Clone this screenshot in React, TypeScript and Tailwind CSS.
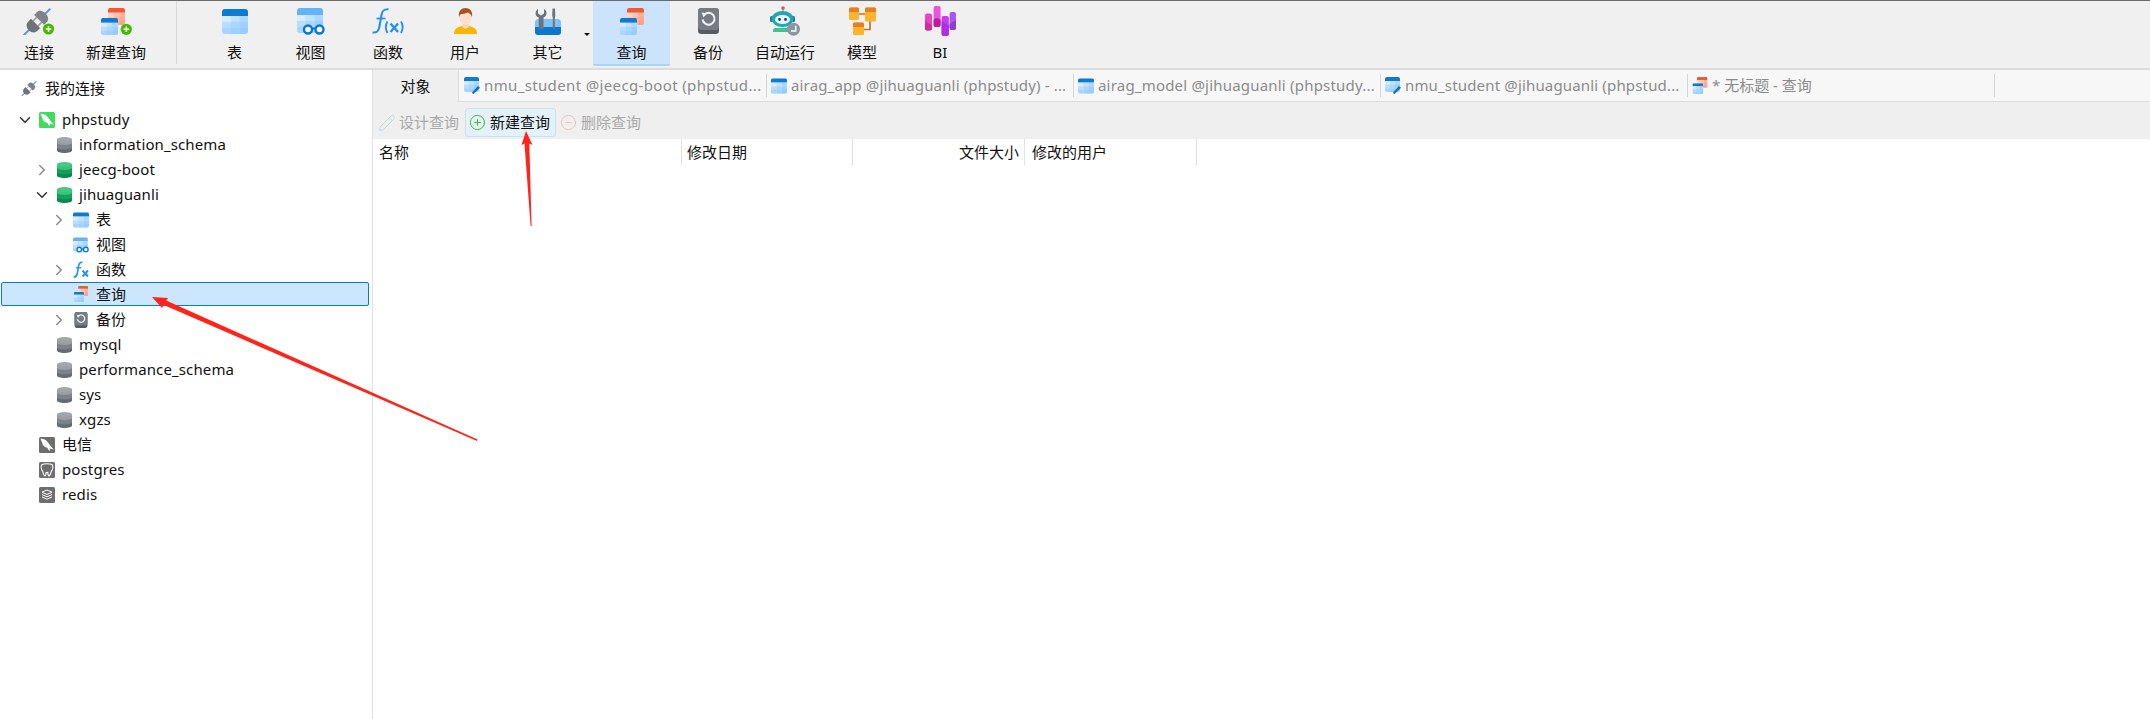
import { useId } from 'react'
import type { ReactNode } from 'react'
import { ChevronDown, ChevronRight, CircleMinus, CirclePlus, Pencil } from 'lucide-react'

const BLUE = ['#d8ecff', '#c0e1ff', '#acd7ff', '#b9ddff', '#aad6ff', '#9dd0ff', '#a8d5ff', '#9ed1ff', '#96ccff']
const RED = ['#ffd6c8', '#ffc3ae', '#ffb097', '#ffc6b2', '#ffb59e', '#ffa88e', '#ffb8a2', '#ffab92', '#ffa085']

function TableShape({ x, y, w, h, head, cells, r = 3 }: { x: number; y: number; w: number; h: number; head: string; cells: string[]; r?: number }) {
  const id = useId()
  const headH = h * 0.28
  const cw = w / 3
  const ch = (h - headH) / 3
  return (
    <g>
      <clipPath id={id}>
        <rect x={x} y={y} width={w} height={h} rx={r} />
      </clipPath>
      <g clipPath={`url(#${id})`}>
        <rect x={x} y={y} width={w} height={headH} fill={head} />
        {cells.map((c, i) => (
          <rect
            key={i}
            x={x + (i % 3) * cw}
            y={y + headH + Math.floor(i / 3) * ch}
            width={cw + 0.3}
            height={ch + 0.3}
            fill={c}
          />
        ))}
      </g>
    </g>
  )
}

function Badge({ cx, cy }: { cx: number; cy: number }) {
  return (
    <g>
      <circle cx={cx} cy={cy} r={5.6} fill="#45b900" />
      <path d={`M${cx - 2.8} ${cy}h5.6M${cx} ${cy - 2.8}v5.6`} stroke="#fff" strokeWidth={1.5} />
    </g>
  )
}

function PlugShape() {
  return (
    <g transform="rotate(-45 14 14)">
      <path d="M-4 14H3M25 14H32" stroke="#5a9bd0" strokeWidth={2} strokeLinecap="round" />
      <path d="M12 7.5H8C4.5 7.5 2.5 10.5 2.5 14S4.5 20.5 8 20.5H12Z" fill="#6c7379" />
      <path d="M17 7H21C24.5 7 26 10.5 26 14S24.5 21 21 21H17Z" fill="#7d8389" />
      <path d="M12 10.5H17M12 17.5H17" stroke="#9a9fa4" strokeWidth={1.6} />
    </g>
  )
}

function PlugIcon({ size = 18, badge = false }: { size?: number; badge?: boolean }) {
  return (
    <svg width={size} height={(size * 27) / 32} viewBox="0 0 32 27">
      <PlugShape />
      {badge && <Badge cx={25.5} cy={21} />}
    </svg>
  )
}

function TableIcon({ w = 16, h = 16 }: { w?: number; h?: number }) {
  return (
    <svg width={w} height={h} viewBox="0 0 26 25">
      <TableShape x={0} y={0} w={26} h={25} head="#0b7bd4" cells={BLUE} />
    </svg>
  )
}

function EditTableIcon() {
  return (
    <svg width={16} height={17} viewBox="0 0 16 17">
      <TableShape x={0} y={0} w={15} h={15} head="#0b7bd4" cells={BLUE} r={2} />
      <path d="M8 15.5L14 9l2 1.8L9.5 17H8Z" fill="#0f6fbd" />
      <path d="M8 15.5V17h1.5Z" fill="#f2b25c" />
    </svg>
  )
}

function QueryIcon({ w = 24, h = 27, badge = false }: { w?: number; h?: number; badge?: boolean }) {
  const vw = badge ? 31 : 24
  return (
    <svg width={w} height={h} viewBox={`0 0 ${vw} 27`}>
      <TableShape x={7} y={0} w={17} h={17} head="#ee5a36" cells={RED} r={2} />
      <TableShape x={0} y={10} w={17} h={17} head="#0b7bd4" cells={BLUE} r={2} />
      {badge && <Badge cx={25.3} cy={21.3} />}
    </svg>
  )
}

function ViewIcon({ w = 28, h = 27 }: { w?: number; h?: number }) {
  return (
    <svg width={w} height={h} viewBox="0 0 28 27">
      <TableShape x={0} y={0} w={26} h={25} head="#62b4f7" cells={BLUE} />
      <circle cx={11} cy={21.5} r={4} fill="#fff" stroke="#0b78d0" strokeWidth={2.4} />
      <circle cx={22.5} cy={21.5} r={4} fill="#fff" stroke="#0b78d0" strokeWidth={2.4} />
      <path d="M15 20.5h3.5" stroke="#0b78d0" strokeWidth={2} />
    </svg>
  )
}

function FxIcon() {
  return (
    <svg width={33} height={26} viewBox="0 0 33 26" fill="none" stroke="#2193ee" strokeWidth={2.1}>
      <path d="M0.5 24.5C5 25 6.5 23.5 7.3 19L9.6 6.5C10.3 2.5 12 1 16.5 1.2" />
      <path d="M4.5 10.5H13.5" strokeWidth={1.7} />
      <path d="M15.5 13.5C13.3 17 13.3 21 15.5 25" strokeWidth={1.9} />
      <path d="M18.5 15.5L26 24M26 15.5L18.5 24" strokeWidth={2.4} />
      <path d="M29 13.5C31.2 17 31.2 21 29 25" strokeWidth={1.9} />
    </svg>
  )
}

function FnSmall() {
  return (
    <svg width={16} height={17} viewBox="0 0 16 17" fill="none" stroke="#2193ee">
      <path d="M0.5 16C3 16.3 3.8 15 4.3 12.5L5.6 5C6 2.3 7 1.2 9.5 1.3" strokeWidth={1.6} />
      <path d="M2.8 6.8H8.4" strokeWidth={1.3} />
      <path d="M9.5 9.5L15 15.5M15 9.5L9.5 15.5" strokeWidth={1.9} />
    </svg>
  )
}

function UserIcon() {
  return (
    <svg width={23} height={26} viewBox="0 0 23 26">
      <path d="M0 26C0 21 3 19 8 18L15 18C20 19 23 21 23 26Z" fill="#f7b500" />
      <rect x={8.5} y={13} width={6} height={7} fill="#f8cfb1" />
      <path d="M8.5 18.5L11.5 21L14.5 18.5Z" fill="#fddcc6" />
      <ellipse cx={11.5} cy={9} rx={6.3} ry={8} fill="#fde0cb" />
      <path d="M5 9C4 3 7.5 0 11.5 0C15.5 0 19 3 18 9C17 6.5 15.5 5 13.5 4.5C11.5 6 8 6 6.8 6C6 7 5.5 8 5 9Z" fill="#a5541f" />
    </svg>
  )
}

function ToolsIcon() {
  return (
    <svg width={26} height={27} viewBox="0 0 26 27">
      <rect x={0} y={11} width={26} height={16} rx={3.5} fill="#80c2f6" />
      <path d="M0 19H26V24C26 25.7 24.7 27 23 27H3C1.3 27 0 25.7 0 24Z" fill="#0b78d0" />
      <path d="M3 1L3 5.5L6 7.5L9 5.5L9 1C11 2 11.8 4 11.5 6C11.2 8 9.8 9 8.5 9.6V21H3.7V9.6C2 9 0.8 7.8 0.6 6C0.4 4 1.2 2 3 1Z" fill="#69747d" />
      <path d="M17.5 0.5H20L20.3 7.5L19.8 10V21H17.8V10L17.2 7.5Z" fill="#69747d" />
    </svg>
  )
}

function BackupIcon({ w = 21, h = 26 }: { w?: number; h?: number }) {
  return (
    <svg width={w} height={h} viewBox="0 0 21 26">
      <rect x={0} y={0} width={21} height={26} rx={3.5} fill="#555b61" />
      <rect x={0} y={0} width={21} height={22} rx={3.5} fill="#767c81" />
      <path d="M5.8 7A6 6 0 1 1 4.6 11.5" fill="none" stroke="#f0f1f2" strokeWidth={2} />
      <path d="M3.8 4.6L9 5.5L5.4 9.6Z" fill="#f0f1f2" />
    </svg>
  )
}

function BotIcon() {
  return (
    <svg width={31} height={30} viewBox="0 0 31 30">
      <path d="M13 2V6" stroke="#6c9aa2" strokeWidth={1.2} />
      <circle cx={13} cy={2} r={1.8} fill="#ec4d4d" />
      <rect x={0} y={10} width={3} height={6} rx={1.5} fill="#0f7f94" />
      <rect x={22} y={10} width={3} height={6} rx={1.5} fill="#0f7f94" />
      <path d="M5 22H18C19.5 22 20.5 23.5 20.5 26H3C3 23.5 3.5 22 5 22Z" fill="#38c78f" />
      <ellipse cx={12.5} cy={13} rx={11} ry={8} fill="#22a7b5" />
      <ellipse cx={12.5} cy={13.5} rx={7.5} ry={4.6} fill="#e6f6fb" />
      <circle cx={9.5} cy={13.5} r={1.4} fill="#1c3d70" />
      <circle cx={15.5} cy={13.5} r={1.4} fill="#1c3d70" />
      <circle cx={23.5} cy={23.2} r={6.5} fill="#8a97a3" />
      <path d="M25.7 19.7V25H21" fill="none" stroke="#fff" strokeWidth={1.4} />
    </svg>
  )
}

function ModelIcon() {
  const box = (x: number, y: number, w: number, h: number) => (
    <g>
      <rect x={x} y={y} width={w} height={h} rx={1.5} fill="#fdb32c" />
      <path d={`M${x} ${y + 4.5}V${y + 1.5}a1.5 1.5 0 0 1 1.5 -1.5h${w - 3}a1.5 1.5 0 0 1 1.5 1.5V${y + 4.5}Z`} fill="#e57d25" />
    </g>
  )
  return (
    <svg width={27} height={28} viewBox="0 0 27 28">
      <path d="M9 7H17M21 13V22.5H14" fill="none" stroke="#c96f2a" strokeWidth={1.7} />
      {box(0, 0.5, 10, 12.5)}
      {box(16, 0.5, 11, 14)}
      {box(4, 15.5, 11, 12.5)}
    </svg>
  )
}

function BiIcon() {
  return (
    <svg width={31} height={30} viewBox="0 0 31 30">
      <rect x={0} y={7.5} width={7} height={17} rx={2} fill="#e646c0" />
      <path d="M0 15C3 16 5 18 7 20V22.5C7 23.6 6.1 24.5 5 24.5H2C0.9 24.5 0 23.6 0 22.5Z" fill="#d52aa0" />
      <rect x={8.6} y={0} width={7} height={21} rx={2} fill="#ee52da" />
      <path d="M8.6 14C10 11.5 14 11.5 15.6 14V19C15.6 20.1 14.7 21 13.6 21H10.6C9.5 21 8.6 20.1 8.6 19Z" fill="#b81f97" />
      <rect x={16.6} y={10} width={7.2} height={20} rx={2} fill="#c33eea" />
      <path d="M16.6 15C19 17 21.5 19 23.8 19V28C23.8 29.1 22.9 30 21.8 30H18.6C17.5 30 16.6 29.1 16.6 28Z" fill="#b02ee0" />
      <rect x={24.6} y={6} width={6.4} height={18} rx={2} fill="#ab54f2" />
      <path d="M24.6 18C27 16 29 15 31 14.5V22C31 23.1 30.1 24 29 24H26.6C25.5 24 24.6 23.1 24.6 22Z" fill="#8a3fd4" />
    </svg>
  )
}

function DbIcon({ green = false }: { green?: boolean }) {
  const top = green ? '#45c985' : '#a2a5a9'
  const mid = green ? '#12a05c' : '#7e8389'
  const low = green ? '#0a8a4a' : '#666c72'
  return (
    <svg width={15} height={16} viewBox="0 0 15 16">
      <path d="M0 2.5V13.5C0 15 3.4 16 7.5 16S15 15 15 13.5V2.5Z" fill={low} />
      <path d="M0 2.5V10C0 11.4 3.4 12.4 7.5 12.4S15 11.4 15 10V2.5Z" fill={mid} />
      <path d="M0 2.5V5.5C0 6.9 3.4 7.9 7.5 7.9S15 6.9 15 5.5V2.5Z" fill={top} opacity={0.8} />
      <ellipse cx={7.5} cy={2.5} rx={7.5} ry={2.5} fill={top} />
    </svg>
  )
}

function ServerIcon({ type, bg }: { type: 'dolphin' | 'elephant' | 'redis'; bg: string }) {
  return (
    <svg width={16} height={16} viewBox="0 0 16 16">
      <rect width={16} height={16} rx={1.5} fill={bg} />
      {type === 'dolphin' && (
        <path d="M1.5 1.8C4.5 1.5 7.5 3 9 5.5C10.5 7.5 12 9.5 14.8 12.5C12.8 12.3 11.6 12 10.6 11.3L11 14.3C9.8 13.5 8.8 12.2 8.4 10.8C5.6 10.5 3.4 8.4 3.2 5.6C2.6 4.4 1.8 3 1.5 1.8Z" fill="#fff" />
      )}
      {type === 'elephant' && (
        <path d="M3 2.5C5 1.5 11 1.5 13 2.5C14.5 4 14 7.5 12.5 9C11.8 10.5 11.4 13 10.2 14C9.4 14.2 9 13 8.8 10.5L7 10.8C7 12.5 6.6 14 5.8 14C4.6 13.4 4 10.8 3.6 9C2 7.5 1.6 4 3 2.5Z" fill="none" stroke="#fff" strokeWidth={1.1} />
      )}
      {type === 'redis' && (
        <g fill="none" stroke="#fff" strokeWidth={1}>
          <path d="M8 3L13 5.2L8 7.4L3 5.2Z" />
          <path d="M3 7.6L8 9.8L13 7.6" />
          <path d="M3 10L8 12.2L13 10" />
        </g>
      )}
    </svg>
  )
}

const toolbarLeft = [
  { label: '连接', width: 'w-[78px]', icon: <PlugIcon size={32} badge /> },
  { label: '新建查询', width: 'w-[76px]', icon: <QueryIcon w={31} h={27} badge /> },
]

const toolbarMain = [
  { label: '表', width: 'w-[77px]', icon: <TableIcon w={26} h={25} /> },
  { label: '视图', width: 'w-[75px]', icon: <ViewIcon /> },
  { label: '函数', width: 'w-[80px]', icon: <FxIcon /> },
  { label: '用户', width: 'w-[74px]', icon: <UserIcon /> },
  { label: '其它', width: 'w-[91px]', icon: <ToolsIcon />, menu: true },
  { label: '查询', width: 'w-[77px]', icon: <QueryIcon />, active: true },
  { label: '备份', width: 'w-[76px]', icon: <BackupIcon /> },
  { label: '自动运行', width: 'w-[78px]', icon: <BotIcon /> },
  { label: '模型', width: 'w-[76px]', icon: <ModelIcon /> },
  { label: 'BI', width: 'w-[80px]', icon: <BiIcon /> },
]

const tabs = [
  { title: 'nmu_student @jeecg-boot (phpstud...', icon: <EditTableIcon />, track: 'tracking-[0.36px]' },
  { title: 'airag_app @jihuaguanli (phpstudy) - ...', icon: <TableIcon />, track: 'tracking-[0.15px]' },
  { title: 'airag_model @jihuaguanli (phpstudy...', icon: <TableIcon />, track: 'tracking-[0.2px]' },
  { title: 'nmu_student @jihuaguanli (phpstud...', icon: <EditTableIcon />, track: 'tracking-[0.16px]' },
  { title: '* 无标题 - 查询', icon: <QueryIcon w={16} h={17} />, track: '' },
]

function ToolbarItem({ label, width, icon, menu, active }: { label: string; width: string; icon: ReactNode; menu?: boolean; active?: boolean }) {
  return (
    <button
      className={`relative flex h-[65px] flex-col items-center pt-[5px] ${width} ${
        active ? 'rounded-b-[2px] border-b-2 border-[#a9d4f7] bg-[#cce4fb]' : ''
      }`}
    >
      <span className="flex h-[30px] items-center justify-center">{icon}</span>
      <span className="mt-[6px] text-[15px] leading-[20px] text-[#111]">{label}</span>
      {menu && (
        <span className="absolute right-[3px] top-[32px] h-0 w-0 border-x-[3px] border-t-[3px] border-x-transparent border-t-[#111]" />
      )}
    </button>
  )
}

type RowProps = {
  pad: string
  arrow?: 'open' | 'closed'
  icon: ReactNode
  label: string
}

function TreeRow({ pad, arrow, icon, label }: RowProps) {
  return (
    <div className={`flex h-[25px] items-center ${pad}`}>
      <span className="mr-[5px] flex w-[18px] justify-center">
        {arrow === 'open' && <ChevronDown size={18} strokeWidth={2} className="text-[#333]" />}
        {arrow === 'closed' && <ChevronRight size={18} strokeWidth={2} className="text-[#8a8a8a]" />}
      </span>
      <span className="flex w-[16px] justify-center">{icon}</span>
      <span className="ml-[7px] text-[15px] tracking-[0.12px] text-[#111]">{label}</span>
    </div>
  )
}

function Sidebar() {
  return (
    <aside className="w-[373px] shrink-0 border-r border-[#e2e2e2] bg-white">
      <div className="flex h-[37px] items-center pl-[21px]">
        <PlugIcon />
        <span className="ml-[6px] text-[15px] text-[#111]">我的连接</span>
      </div>
      <TreeRow pad="pl-[16px]" arrow="open" label="phpstudy" icon={<ServerIcon type="dolphin" bg="#3fdc5e" />} />
      <TreeRow pad="pl-[33px]" label="information_schema" icon={<DbIcon />} />
      <TreeRow pad="pl-[33px]" arrow="closed" label="jeecg-boot" icon={<DbIcon green />} />
      <TreeRow pad="pl-[33px]" arrow="open" label="jihuaguanli" icon={<DbIcon green />} />
      <TreeRow pad="pl-[50px]" arrow="closed" label="表" icon={<TableIcon />} />
      <TreeRow pad="pl-[50px]" label="视图" icon={<ViewIcon w={17} h={16} />} />
      <TreeRow pad="pl-[50px]" arrow="closed" label="函数" icon={<FnSmall />} />
      <div className="mb-[1px] ml-[1px] flex h-[24px] w-[368px] items-center rounded-[2px] border border-[#0a7bd4] bg-[#cce6fe] pl-[48px]">
        <span className="mr-[5px] w-[18px]" />
        <QueryIcon w={16} h={16} />
        <span className="ml-[7px] text-[15px] text-[#111]">查询</span>
      </div>
      <TreeRow pad="pl-[50px]" arrow="closed" label="备份" icon={<BackupIcon w={14} h={16} />} />
      <TreeRow pad="pl-[33px]" label="mysql" icon={<DbIcon />} />
      <TreeRow pad="pl-[33px]" label="performance_schema" icon={<DbIcon />} />
      <TreeRow pad="pl-[33px]" label="sys" icon={<DbIcon />} />
      <TreeRow pad="pl-[33px]" label="xgzs" icon={<DbIcon />} />
      <TreeRow pad="pl-[16px]" label="电信" icon={<ServerIcon type="dolphin" bg="#6e6e6e" />} />
      <TreeRow pad="pl-[16px]" label="postgres" icon={<ServerIcon type="elephant" bg="#6e6e6e" />} />
      <TreeRow pad="pl-[16px]" label="redis" icon={<ServerIcon type="redis" bg="#6e6e6e" />} />
    </aside>
  )
}

function ObjectsPane() {
  return (
    <main className="min-w-0 flex-1">
      <div className="flex h-[32px] bg-[#f7f7f7]">
        <div className="flex w-[86px] shrink-0 items-center justify-center border-r border-[#dcdcdc] bg-[#efefef] text-[15px] text-[#111]">
          对象
        </div>
        <div className="flex flex-1 border-b border-[#dcdcdc] pl-[1px]">
          {tabs.map((tab) => (
            <div key={tab.title} className="flex w-[307px] items-center pl-[4px]">
              <span className="flex w-[16px] justify-center">{tab.icon}</span>
              <span className={`ml-[4px] whitespace-nowrap text-[15px] text-[#8b8b8b] ${tab.track}`}>{tab.title}</span>
              <span className="ml-auto h-[23px] w-px bg-[#d6d6d6]" />
            </div>
          ))}
        </div>
      </div>
      <div className="flex h-[37px] bg-[#efefef] pl-[5px] pt-[6px]">
        <div className="mr-[6px] flex h-[29px] items-center gap-[3px] text-[15px] text-[#a9a9a9]">
          <Pencil size={18} strokeWidth={1.2} className="text-[#c0d2e0]" />
          设计查询
        </div>
        <div className="mr-[4px] flex h-[29px] items-center gap-[4px] rounded-[3px] border border-[#c9e0f2] bg-[#e3f1fb] pl-[3px] pr-[5px] text-[15px] text-[#111]">
          <CirclePlus size={17} strokeWidth={1.4} className="text-[#45b91e]" />
          新建查询
        </div>
        <div className="flex h-[29px] items-center gap-[4px] text-[15px] text-[#a9a9a9]">
          <CircleMinus size={17} strokeWidth={1.4} className="text-[#eac2bb]" />
          删除查询
        </div>
      </div>
      <div className="flex h-[26px] text-[15px] leading-[26px] text-[#111]">
        <div className="w-[309px] border-r border-[#e2e2e2] pl-[6px]">名称</div>
        <div className="w-[171px] border-r border-[#e2e2e2] pl-[5px]">修改日期</div>
        <div className="w-[172px] border-r border-[#e2e2e2] pr-[5px] text-right">文件大小</div>
        <div className="w-[172px] border-r border-[#e2e2e2] pl-[7px]">修改的用户</div>
      </div>
    </main>
  )
}

export default function App() {
  return (
    <div className="relative flex h-[719px] w-[2150px] flex-col overflow-hidden bg-white font-['Noto_Sans','Noto_Sans_CJK_SC',sans-serif]">
      <header className="flex h-[70px] shrink-0 border-b-2 border-t border-b-[#dcdcdc] border-t-[#6a6a6a] bg-[#f0f0f0]">
        {toolbarLeft.map((item) => (
          <ToolbarItem key={item.label} {...item} />
        ))}
        <div className="ml-[22px] mr-[19px] h-[63px] w-px bg-[#d9d9d9]" />
        {toolbarMain.map((item) => (
          <ToolbarItem key={item.label} {...item} />
        ))}
      </header>
      <div className="flex min-h-0 flex-1">
        <Sidebar />
        <ObjectsPane />
      </div>
      {/* annotation arrows drawn over the screenshot */}
      <svg className="pointer-events-none absolute inset-0" width={2150} height={719}>
        <polygon points="152,297 168,298 166.2,300.6 477.6,439.6 477,441 163.8,305 162,308" fill="#ff2419" />
        <polygon points="526,131 532.5,145 529.3,143.5 531.6,226 530.6,226 524.5,143.5 521.5,145" fill="#ff2419" />
      </svg>
    </div>
  )
}
